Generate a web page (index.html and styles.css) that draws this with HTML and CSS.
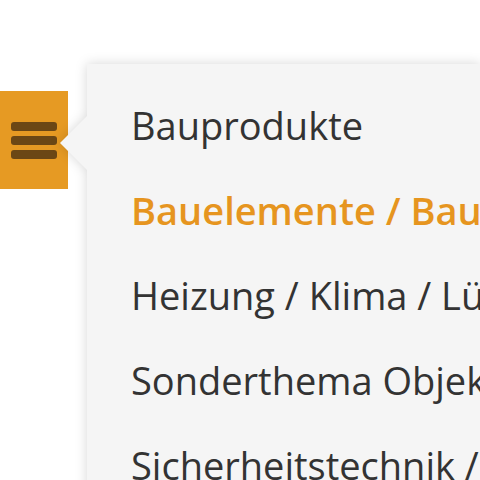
FILE: index.html
```html
<!DOCTYPE html>
<html lang="de">
<head>
<meta charset="utf-8">
<link rel="stylesheet" href="styles.css">
</head>
<body>
<div class="page">
  <button class="toggle" aria-label="Menü">
    <span class="bar"></span>
    <span class="bar"></span>
    <span class="bar"></span>
  </button>
  <nav class="flyout">
    <ul class="menu">
      <li class="item">Bauprodukte</li>
      <li class="item active">Bauelemente / Bauausstattung</li>
      <li class="item">Heizung / Klima / Lüftung</li>
      <li class="item">Sonderthema Objektbau</li>
      <li class="item">Sicherheitstechnik / Brandschutz</li>
    </ul>
  </nav>
</div>
</body>
</html>
```
FILE: styles.css
```css
html, body {
  margin: 0;
  padding: 0;
  background: #ffffff;
  overflow: hidden;
  height: 480px;
}
.page {
  display: flex;
  align-items: flex-start;
  height: 480px;
  overflow: hidden;
}
.toggle {
  margin-top: 91px;
  width: 68px;
  height: 98px;
  background: #e69a23;
  border: 0;
  padding: 0 0 0 11px;
  display: flex;
  flex-direction: column;
  justify-content: center;
  gap: 5px;
  flex: none;
}
.bar {
  display: block;
  width: 46px;
  height: 9px;
  border-radius: 3px;
  background: #6b4715;
}
.flyout {
  position: relative;
  margin-top: 64px;
  margin-left: 19px;
  flex: 1;
  min-width: 0;
  height: 600px;
  filter: drop-shadow(0 0 6px rgba(0,0,0,0.16));
}
.flyout::before {
  content: "";
  position: absolute;
  left: -27px;
  top: 51px;
  width: 28px;
  height: 56px;
  background: #f5f5f5;
  clip-path: polygon(0 50%, 100% 0, 100% 100%);
}
.menu {
  position: relative;
  margin: 0;
  padding: 19px 0 0 44px;
  list-style: none;
  background: #f5f5f5;
  height: 100%;
  box-sizing: border-box;
  overflow: hidden;
}
.item {
  font-family: "Open Sans", sans-serif;
  font-size: 38px;
  line-height: 85px;
  color: #333333;
  white-space: nowrap;
}
.item.active {
  color: #e6951f;
  font-weight: 600;
}
```
